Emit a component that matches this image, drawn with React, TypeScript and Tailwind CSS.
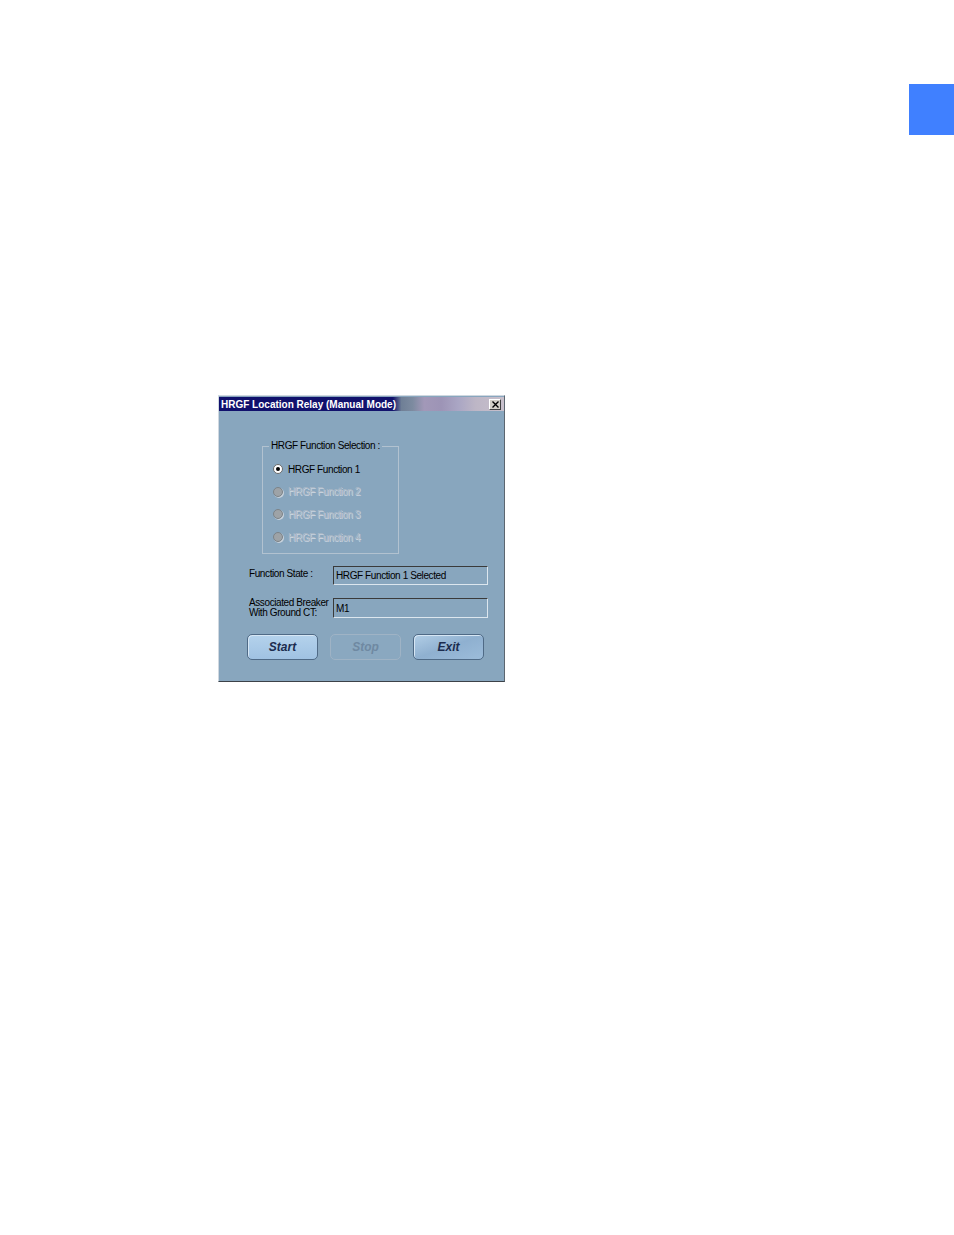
import React from 'react';

const font = { fontFamily: '"Liberation Sans", Arial, sans-serif' };

function Radio({ label, checked, disabled }: { label: string; checked?: boolean; disabled?: boolean }) {
  return (
    <div className="flex items-center h-[22.6px] gap-[5px]">
      {checked ? (
        <span className="w-[10px] h-[10px] rounded-full bg-white border border-[#6b6b6b] flex items-center justify-center">
          <span className="w-[4px] h-[4px] rounded-full bg-black" />
        </span>
      ) : (
        <span className="w-[10px] h-[10px] rounded-full bg-[#9ea3a7] border border-[#7c8388] shadow-[1px_1px_0_#c8d2dc]" />
      )}
      <span
        className={
          disabled
            ? 'text-[10px] tracking-[-0.4px] text-[#aab8c6] [text-shadow:1px_1px_0_#c8d3de]'
            : 'text-[10px] tracking-[-0.4px] text-black'
        }
      >
        {label}
      </span>
    </div>
  );
}

function Button({ label, disabled, variant }: { label: string; disabled?: boolean; variant?: 'light' | 'mid' }) {
  if (disabled) {
    return (
      <div className="w-[71px] h-[26px] rounded-[5px] border border-[#9fb3c5] bg-[#8aa8c0] flex items-center justify-center">
        <span className="text-[12px] font-bold italic text-[#6f89a2]">{label}</span>
      </div>
    );
  }
  return (
    <div
      className={
        variant === 'mid'
          ? 'w-[71px] h-[26px] rounded-[5px] border border-[#4f6a86] bg-gradient-to-br from-[#b2cee6] via-[#8fb0d0] to-[#9cbcda] shadow-[inset_1px_1px_0_#d6e6f4] flex items-center justify-center'
          : 'w-[71px] h-[26px] rounded-[5px] border border-[#4f6a86] bg-gradient-to-b from-[#b4d2ec] to-[#a0c2e2] shadow-[inset_1px_1px_0_#d6e6f4] flex items-center justify-center'
      }
    >
      <span className="text-[12px] font-bold italic text-[#1c2c4e]">{label}</span>
    </div>
  );
}

export default function App() {
  return (
    <div className="bg-white w-[954px] h-[1235px] overflow-hidden" style={font}>
      {/* page tab */}
      <div className="flex justify-end pt-[84px]">
        <div className="w-[45px] h-[51px] bg-[#4080ff]" />
      </div>

      {/* dialog */}
      <div className="ml-[218px] mt-[260px] w-[287px] h-[287px] bg-[#88a6be] border-t border-l border-[#d0d8e0] border-r border-b border-r-[#5c6670] border-b-[#3c4248] flex flex-col">
        {/* title bar */}
        <div className="h-[14px] mt-[1px] flex items-center justify-between bg-[linear-gradient(90deg,#10106c_0%,#12126c_61%,#6f7f96_64%,#7d8ba0_68%,#a298b8_72%,#9d94b6_78%,#aaa6c4_84%,#bdb6c6_90%,#c8c0cc_100%)] pl-[2px] pr-[3px]">
          <span className="text-white text-[10px] font-bold">HRGF Location Relay (Manual Mode)</span>
          <div className="w-[12px] h-[11px] bg-[#d4d0c8] border border-t-white border-l-white border-r-[#404040] border-b-[#404040] flex items-center justify-center">
            <svg width="7" height="7" viewBox="0 0 7 7">
              <path d="M0.5 0.5 L6.5 6.5 M6.5 0.5 L0.5 6.5" stroke="#000" strokeWidth="1.4" />
            </svg>
          </div>
        </div>

        {/* group box */}
        <fieldset className="ml-[43px] mt-[29px] w-[137px] h-[114px] border border-[#b2c2d0] px-[10px] pt-[6px]">
          <legend className="ml-[-4px] px-[2px] text-[10px] tracking-[-0.4px] text-black leading-[12px]">HRGF Function Selection :</legend>
          <Radio label="HRGF Function 1" checked />
          <Radio label="HRGF Function 2" disabled />
          <Radio label="HRGF Function 3" disabled />
          <Radio label="HRGF Function 4" disabled />
        </fieldset>

        {/* fields */}
        <div className="ml-[30px] mt-[12px] flex items-center">
          <span className="w-[84px] text-[10px] tracking-[-0.4px] text-black -mt-[4px]">Function State :</span>
          <div className="w-[155px] h-[19px] border border-t-[#3a3a3a] border-l-[#3a3a3a] border-r-[#dce6ee] border-b-[#dce6ee] flex items-center px-[2px]">
            <span className="text-[10px] tracking-[-0.4px] text-black">HRGF Function 1 Selected</span>
          </div>
        </div>
        <div className="ml-[30px] mt-[13px] flex items-start">
          <div className="w-[84px] flex flex-col text-[10px] leading-[10px] tracking-[-0.4px] text-black">
            <span className="whitespace-nowrap">Associated Breaker</span>
            <span>With Ground CT:</span>
          </div>
          <div className="w-[155px] h-[20px] border border-t-[#3a3a3a] border-l-[#3a3a3a] border-r-[#dce6ee] border-b-[#dce6ee] flex items-center px-[2px]">
            <span className="text-[10px] tracking-[-0.4px] text-black">M1</span>
          </div>
        </div>

        {/* buttons */}
        <div className="ml-[28px] mt-[16px] flex gap-[12px]">
          <Button label="Start" />
          <Button label="Stop" disabled />
          <Button label="Exit" variant="mid" />
        </div>
      </div>
    </div>
  );
}
